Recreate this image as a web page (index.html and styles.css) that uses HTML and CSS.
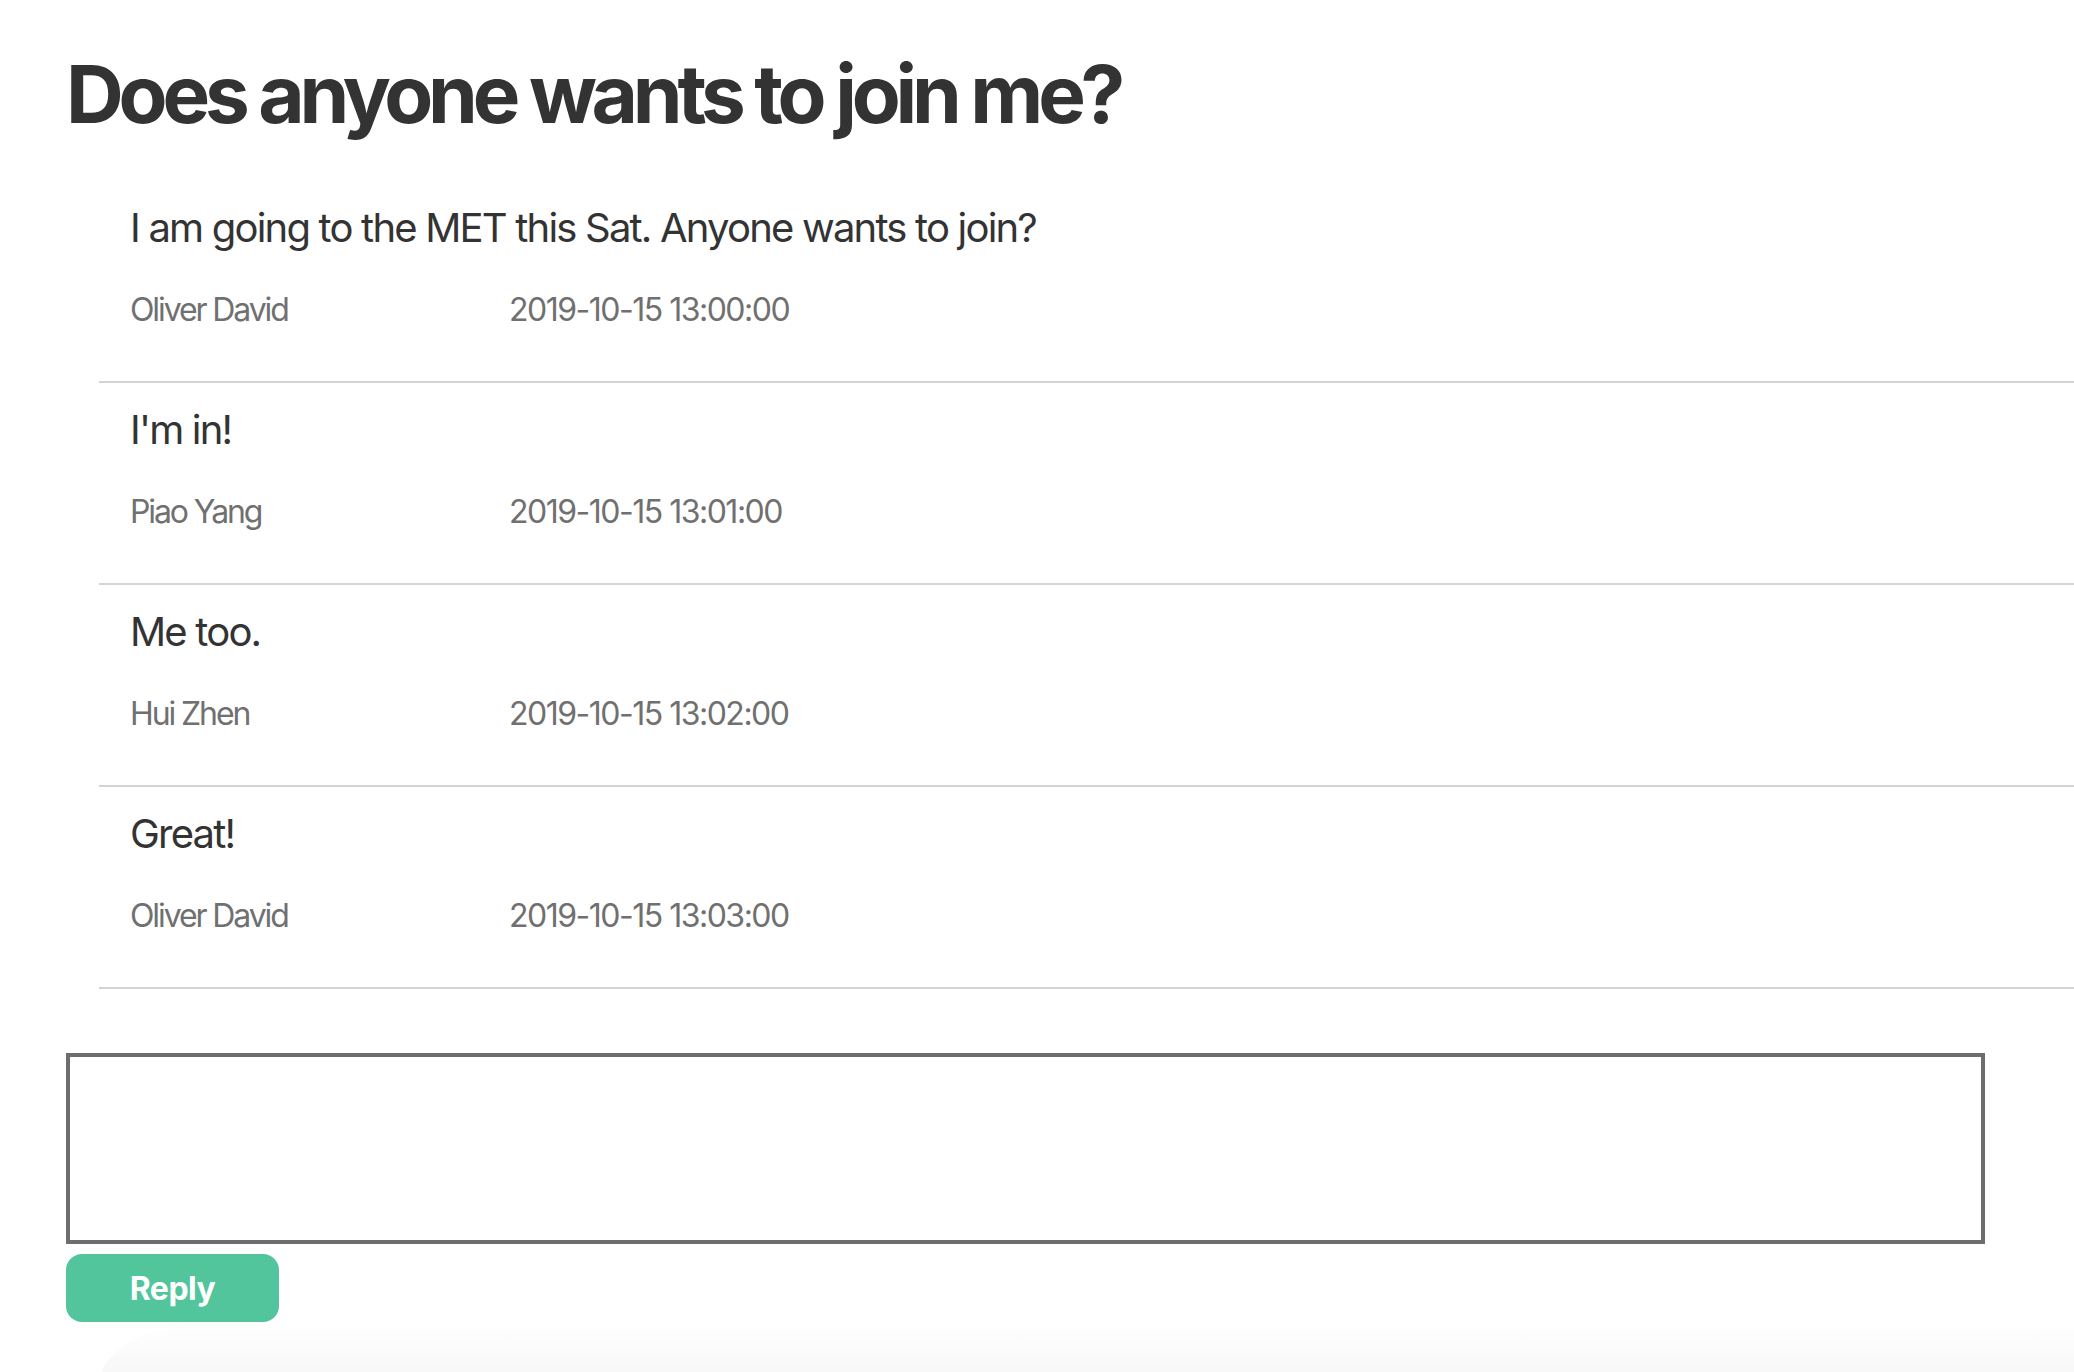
FILE: index.html
```html
<!DOCTYPE html>
<html>
<head>
<meta charset="utf-8">
<title>Does anyone wants to join me?</title>
<link rel="stylesheet" href="styles.css">
</head>
<body>
<main class="page">
  <h1 class="title">Does anyone wants to join me?</h1>
  <ul class="posts">
    <li class="post">
      <p class="post-text">I am going to the MET this Sat. Anyone wants to join?</p>
      <div class="meta"><span class="author">Oliver David</span><span class="time">2019-10-15 13:00:00</span></div>
    </li>
    <li class="post">
      <p class="post-text">I'm in!</p>
      <div class="meta"><span class="author">Piao Yang</span><span class="time">2019-10-15 13:01:00</span></div>
    </li>
    <li class="post">
      <p class="post-text">Me too.</p>
      <div class="meta"><span class="author">Hui Zhen</span><span class="time">2019-10-15 13:02:00</span></div>
    </li>
    <li class="post">
      <p class="post-text">Great!</p>
      <div class="meta"><span class="author">Oliver David</span><span class="time">2019-10-15 13:03:00</span></div>
    </li>
  </ul>
  <form class="reply-form">
    <textarea class="reply-box"></textarea>
    <button type="button" class="reply-btn">Reply</button>
  </form>
  <div class="footer-shade"></div>
</main>
</body>
</html>
```

FILE: styles.css
```css
html, body {
  margin: 0;
  padding: 0;
  background: #ffffff;
}

body {
  font-family: Inter, "Noto Sans", "Liberation Sans", sans-serif;
  color: #333333;
  overflow: hidden;
}

.page {
  padding: 46px 0 0 66px;
}

.title {
  margin: 0;
  font-size: 80px;
  line-height: 96px;
  font-weight: 700;
  letter-spacing: -5.2px;
  color: #333333;
}

.posts {
  list-style: none;
  margin: 39px 0 0 33px;
  padding: 0;
}

.post {
  padding: 23px 0 51px 31px;
  border-bottom: 2px solid #d4d4d4;
}

.post-text {
  margin: 0;
  font-size: 40px;
  line-height: 48px;
  color: #333333;
  letter-spacing: -1.8px;
}

.meta {
  display: flex;
  margin-top: 38px;
  font-size: 32px;
  line-height: 40px;
  color: #707070;
}

.author {
  width: 379px;
  flex: none;
  letter-spacing: -2.1px;
}

.time {
  letter-spacing: -1.5px;
}

.reply-form {
  display: flex;
  flex-direction: column;
  align-items: flex-start;
  margin-top: 64px;
}

.reply-box {
  box-sizing: border-box;
  width: 1919px;
  height: 191px;
  margin: 0;
  border: 4px solid #6d6d6d;
  border-radius: 0;
  resize: none;
  font: inherit;
  outline: none;
}

.reply-btn {
  margin-top: 10px;
  width: 213px;
  height: 68px;
  border: none;
  border-radius: 16px;
  background: #52c59c;
  color: #ffffff;
  font-family: Inter, "Noto Sans", sans-serif;
  font-size: 32px;
  font-weight: 700;
  letter-spacing: -0.5px;
  padding: 0;
  cursor: pointer;
}

.footer-shade {
  margin-left: 34px;
  height: 60px;
  border-top-left-radius: 120px 60px;
  background: linear-gradient(to bottom, #ffffff 0%, #f6f6f6 100%);
}
```
